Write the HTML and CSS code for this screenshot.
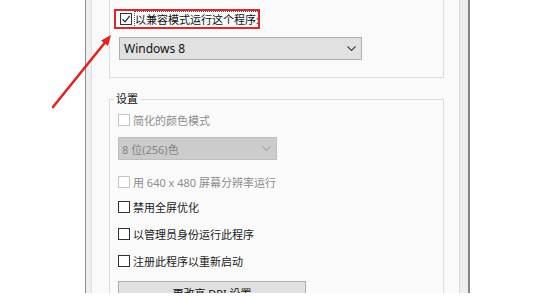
FILE: index.html
```html
<!DOCTYPE html>
<html lang="zh-CN">
<head>
<meta charset="utf-8">
<title>兼容性</title>
<link rel="stylesheet" href="styles.css">
</head>
<body>
<div class="stage">
  <div class="window">
    <div class="content">
      <div class="group group-compat">
        <div class="highlight">
          <span class="cb checked"><svg viewBox="0 0 10 10" width="10" height="10"><path d="M1.5 5.2 L4 7.8 L8.8 1.8" fill="none" stroke="#222" stroke-width="1.2"/></svg></span>
          <span class="label focus">以兼容模式运行这个程序:</span>
        </div>
        <div class="select select-os">
          <span>Windows 8</span>
          <svg class="chev" viewBox="0 0 9 5" width="9" height="5"><path d="M0.5 0.5 L4.5 4.5 L8.5 0.5" fill="none" stroke="#444" stroke-width="1.1"/></svg>
        </div>
      </div>
      <fieldset class="group group-settings">
        <legend>设置</legend>
        <div class="settings-body">
          <div class="row disabled row-color"><span class="cb"></span><span>简化的颜色模式</span></div>
          <div class="select select-color disabled">
            <span>8 位(256)色</span>
            <svg class="chev" viewBox="0 0 9 5" width="9" height="5"><path d="M0.5 0.5 L4.5 4.5 L8.5 0.5" fill="none" stroke="#a8a8a8" stroke-width="1.1"/></svg>
          </div>
          <div class="row disabled row-res"><span class="cb"></span><span>用 640 x 480 屏幕分辨率运行</span></div>
          <div class="row row-fso"><span class="cb"></span><span>禁用全屏优化</span></div>
          <div class="row row-admin"><span class="cb"></span><span>以管理员身份运行此程序</span></div>
          <div class="row row-restart"><span class="cb"></span><span>注册此程序以重新启动</span></div>
          <div class="button">更改高 DPI 设置</div>
        </div>
      </fieldset>
    </div>
  </div>
  <svg class="arrow" viewBox="0 0 545 297" width="545" height="297">
    <line x1="53" y1="107" x2="105" y2="42.5" stroke="#e3231f" stroke-width="2.6" stroke-linecap="round"/>
    <polygon points="111,35 108,46 101,40.5" fill="#e3231f"/>
  </svg>
</div>
</body>
</html>
```

FILE: styles.css
```css
html, body {
  margin: 0;
  padding: 0;
  background: #ffffff;
}

body {
  font-family: "Noto Sans", "Noto Sans CJK SC", sans-serif;
  font-size: 11px;
  color: #1c1c1c;
}

.stage {
  position: relative;
  width: 545px;
  height: 297px;
  overflow: hidden;
}

.window {
  margin-left: 85px;
  width: 385px;
  height: 293px;
  box-sizing: border-box;
  border-left: 1px solid #8e8e8e;
  border-right: 2px solid #858585;
  background: #eeeeee;
  padding: 0 8px 0 5px;
  display: flex;
  overflow: hidden;
}

.content {
  flex: 1;
  background: #fafafa;
  border-left: 1px solid #e0e0e0;
  border-right: 1px solid #dadada;
  padding: 0 15px 0 17px;
}

.group {
  border: 1px solid #dcdcdc;
}

.group-compat {
  border-top: none;
  padding: 9px 0 17px 4px;
}

.highlight {
  display: flex;
  align-items: center;
  gap: 3px;
  width: 146px;
  height: 20px;
  box-sizing: border-box;
  border: 2px solid #e0262a;
  padding-left: 4px;
  overflow: hidden;
  white-space: nowrap;
}

.label.focus {
  outline: 1px dotted #555;
  outline-offset: 0;
  line-height: 15px;
  color: #111;
}

.cb {
  flex: none;
  width: 12px;
  height: 12px;
  box-sizing: border-box;
  border: 1px solid #333333;
  background: #ffffff;
  display: flex;
  align-items: center;
  justify-content: center;
}

.select {
  display: flex;
  align-items: center;
  justify-content: space-between;
  box-sizing: border-box;
  height: 23px;
  border: 1px solid #adadad;
  background: #e1e1e1;
  padding: 0 5px 0 4px;
  white-space: nowrap;
}

.select-os {
  margin: 8px 0 0 5px;
  width: 243px;
  font-size: 12px;
  color: #111;
}

.group-settings {
  margin: 13px 0 0 0;
  padding: 0;
  min-width: 0;
}

.group-settings legend {
  margin-left: 4px;
  padding: 0 2px;
  line-height: 16px;
  color: #111;
}

.settings-body {
  display: flex;
  flex-direction: column;
  align-items: flex-start;
  padding-left: 8px;
  height: 200px;
}

.row {
  display: flex;
  align-items: center;
  gap: 3px;
  height: 16px;
  white-space: nowrap;
}

.row.disabled {
  color: #8d8d8d;
}

.row.disabled .cb {
  border-color: #c4c4c4;
}

.row-color { margin-top: 5px; }
.row-res { margin-top: 14px; }
.row-fso { margin-top: 9px; }
.row-admin { margin-top: 11px; }
.row-restart { margin-top: 11px; }

.select-color {
  margin-top: 9px;
  width: 159px;
  padding-left: 3px;
}

.select.disabled {
  background: #cccccc;
  border-color: #bfbfbf;
  color: #838383;
}

.button {
  margin-top: 12px;
  width: 188px;
  height: 23px;
  box-sizing: border-box;
  border: 1px solid #adadad;
  background: #e1e1e1;
  display: flex;
  align-items: center;
  justify-content: center;
  color: #111;
}

.arrow {
  position: absolute;
  left: 0;
  top: 0;
  pointer-events: none;
}
```
